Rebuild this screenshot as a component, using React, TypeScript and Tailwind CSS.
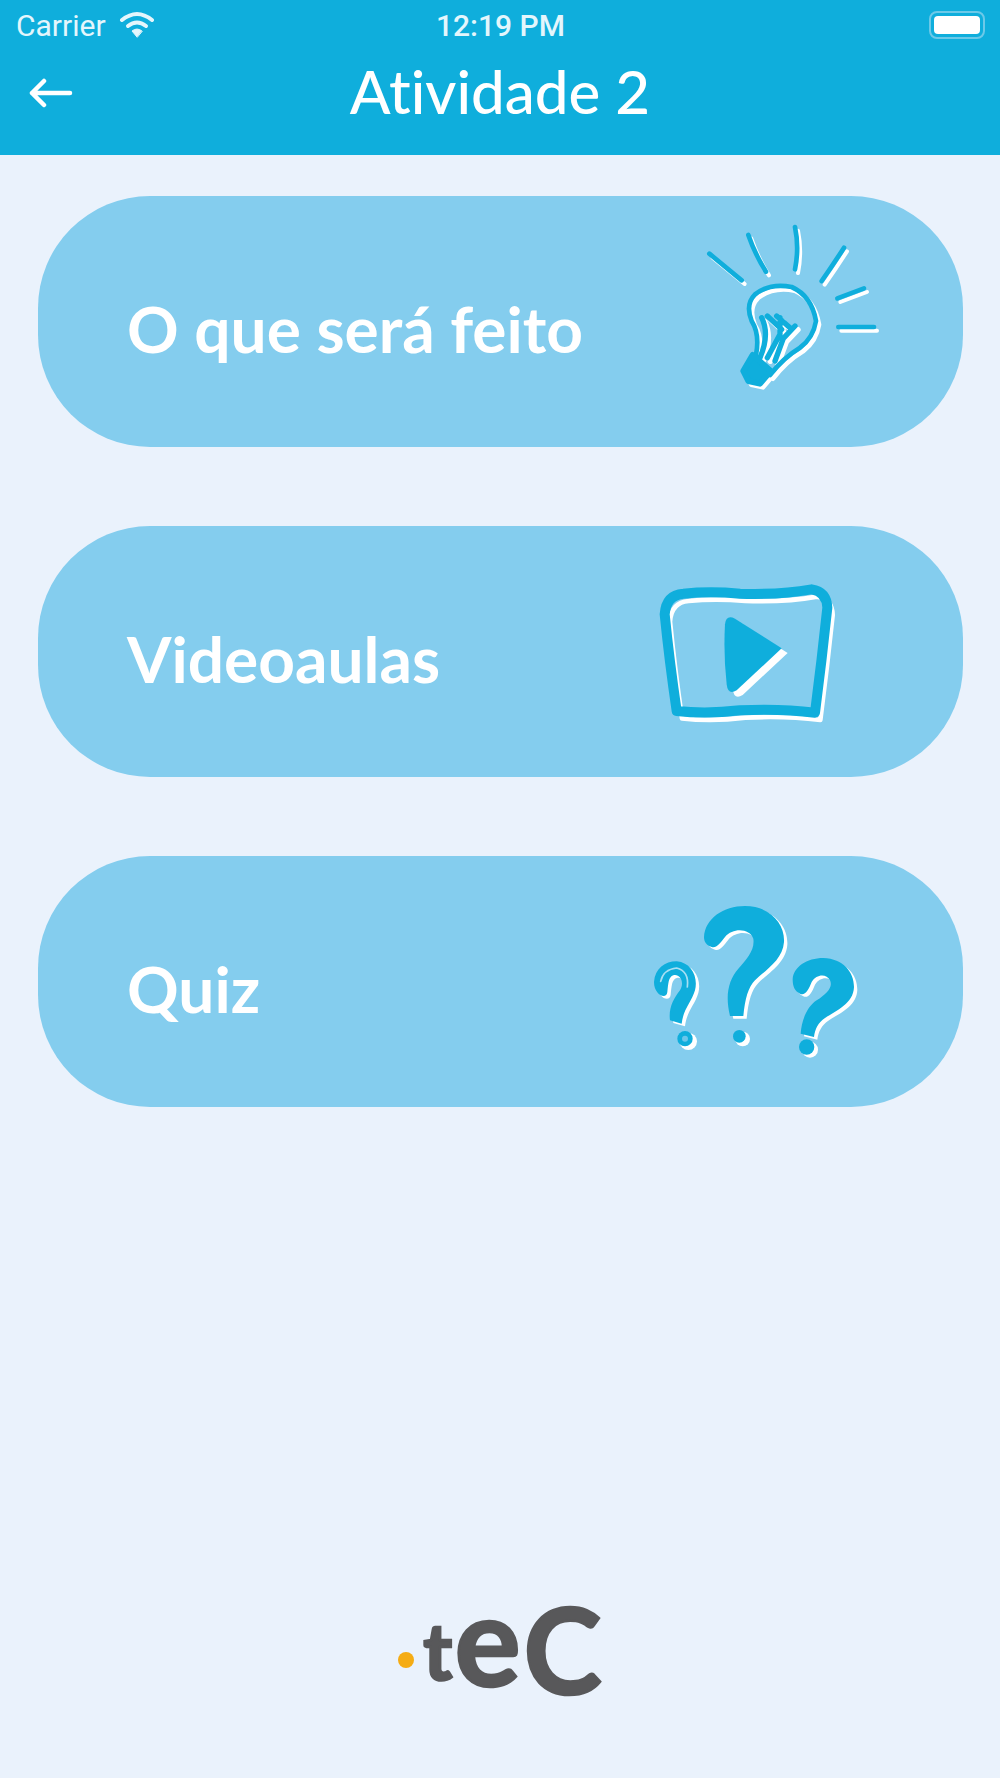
const BLUE = "#0faedc";

function BulbIcon() {
  const rays = (
    <>
      <path d="M88 158 L185 238" />
      <path d="M205 102 Q225 160 258 212" />
      <path d="M345 78 Q358 140 345 205" />
      <path d="M492 140 Q460 190 425 240" />
      <path d="M552 262 L472 292" />
      <path d="M582 378 L475 378" />
    </>
  );
  const bulb = (
    <>
      <path d="M228 462 Q240 400 215 360 Q195 310 225 280 Q270 245 335 258 Q395 285 408 360 Q400 410 360 440 Q310 470 270 522" strokeWidth="14" />
      <path d="M245 350 Q270 400 240 470 M300 350 L300 400 L262 470 M345 375 L310 412 L285 480 M262 345 L305 385 M290 345 L335 385" strokeWidth="16" />
    </>
  );
  const base = "M190 510 L218 462 L272 510 L240 548 L205 540 Z";
  return (
    <svg viewBox="0 0 660 630" className="h-[210px] w-[220px] shrink-0" fill="none" strokeLinecap="round" strokeLinejoin="round">
      <g stroke="#ffffff" strokeWidth="12" transform="translate(9 11)">
        {rays}
        {bulb}
        <path d={base} fill="#ffffff" strokeWidth="14" />
      </g>
      <g stroke={BLUE} strokeWidth="14">
        {rays}
        {bulb}
        <path d={base} fill={BLUE} strokeWidth="18" />
      </g>
    </svg>
  );
}

function VideoIcon() {
  const frame = "M74 130 Q78 72 130 68 Q210 60 300 68 Q420 72 515 55 Q560 62 562 110 Q545 270 525 425 Q420 412 300 418 Q200 430 110 420 Q88 270 74 130 Z";
  const play = "M255 160 Q258 130 285 143 L425 232 L290 358 Q264 374 260 340 Q250 250 255 160 Z";
  return (
    <svg viewBox="0 0 660 510" className="h-[170px] w-[220px] shrink-0" fill="none" strokeLinejoin="round">
      <path d={frame} stroke="#ffffff" strokeWidth="14" transform="translate(16 22)" />
      <path d={play} fill="#ffffff" transform="translate(18 14)" />
      <path d={frame} stroke={BLUE} strokeWidth="30" />
      <path d={play} fill={BLUE} />
    </svg>
  );
}

function QuizIcon() {
  const big = "M222 135 C225 80 280 42 345 42 C420 42 465 95 462 150 C458 205 405 235 375 265 C355 285 345 320 340 372 L300 372 C285 310 295 265 325 230 C350 200 375 175 370 140 C360 110 310 105 285 135 C270 155 258 170 245 165 C230 160 222 150 222 135 Z";
  const mid = "M488 262 C490 225 530 198 580 198 C640 200 672 240 672 285 C670 335 620 355 585 378 C565 392 555 410 552 435 L512 425 C515 385 530 345 560 325 C590 305 610 285 600 265 C590 245 560 245 545 270 C535 295 525 312 510 305 C495 298 488 285 488 262 Z";
  const small = "M72 270 C75 230 105 208 140 208 C185 212 205 255 195 295 C185 330 160 350 155 395 L120 385 C115 350 130 320 150 295 C165 270 150 245 130 250 C115 255 115 275 112 300 C110 325 72 310 72 270 Z";
  return (
    <svg viewBox="0 0 720 540" className="h-[180px] w-[240px] shrink-0" fill="none" strokeLinecap="round" strokeLinejoin="round">
      <g fill="#ffffff" transform="translate(10 8)">
        <path d={big} />
        <path d={mid} />
        <path d={small} />
        <circle cx="328" cy="433" r="22" />
        <circle cx="530" cy="465" r="24" />
        <circle cx="165" cy="440" r="26" />
      </g>
      <g fill={BLUE}>
        <path d={big} />
        <path d={mid} />
        <path d={small} />
        <circle cx="328" cy="433" r="19" />
        <circle cx="530" cy="465" r="23" />
        <circle cx="165" cy="440" r="23" />
      </g>
      <path d="M92 268 Q100 232 140 228 Q178 238 172 285" stroke="#a8dff3" strokeWidth="5" />
      <circle cx="165" cy="440" r="9" fill="#6cc6ea" />
    </svg>
  );
}

function MenuCard({ label, children }: { label: string; children: React.ReactNode }) {
  return (
    <div className="flex h-[251px] items-center justify-between rounded-[112px] bg-[#84cdee] pl-[89px]">
      <span className="pt-[14px] text-[64px] font-bold leading-none text-white">{label}</span>
      {children}
    </div>
  );
}

export default function App() {
  return (
    <div className="flex h-[1778px] w-[1000px] flex-col bg-[#eaf2fc] font-['Lato',sans-serif]">
      <header className="h-[155px] shrink-0 bg-[#0faedc] text-white">
        <div className="relative flex h-[50px] items-center justify-between pl-[16px] pr-[15px] font-['Roboto',sans-serif] text-[30px] text-[#e4f6fc]">
          <div className="flex items-center gap-[13px]">
            <span>Carrier</span>
            <svg viewBox="0 0 36 28" className="h-[28px] w-[36px]" fill="none" stroke="currentColor" strokeLinecap="round">
              <path d="M3 9 Q18 -3 33 9" strokeWidth="4" />
              <path d="M9 15 Q18 8 27 15" strokeWidth="4" />
              <path d="M18 26 L13 20 Q18 16 23 20 Z" fill="currentColor" strokeWidth="1" />
            </svg>
          </div>
          <span className="absolute left-[436px] font-medium">12:19 PM</span>
          <div className="flex h-[28px] w-[56px] items-center rounded-[8px] border-2 border-[#6cc9e8] p-[3px]">
            <div className="h-full w-full rounded-[4px] bg-white" />
          </div>
        </div>
        <div className="relative flex h-[80px] items-center justify-center">
          <svg viewBox="0 0 44 30" className="absolute left-[29px] top-[28px] h-[30px] w-[44px]" fill="none" stroke="#ffffff" strokeWidth="4.5" strokeLinecap="round" strokeLinejoin="round">
            <path d="M3 15 H41 M15 3 L3 15 L15 27" />
          </svg>
          <h1 className="pt-[2px] text-[60px] font-medium leading-none [font-variant-ligatures:none]">Atividade 2</h1>
        </div>
      </header>
      <main className="flex flex-col gap-[79px] pl-[38px] pr-[37px] pt-[41px]">
        <MenuCard label="O que será feito">
          <div className="mb-[32px] mr-[63px]">
            <BulbIcon />
          </div>
        </MenuCard>
        <MenuCard label="Videoaulas">
          <div className="mt-[8px] mr-[103px]">
            <VideoIcon />
          </div>
        </MenuCard>
        <MenuCard label="Quiz">
          <div className="mr-[93px]">
            <QuizIcon />
          </div>
        </MenuCard>
      </main>
      <footer className="mt-auto flex justify-center pb-[70px]">
        <div className="flex items-baseline font-bold leading-none text-[#58585a] [-webkit-text-stroke:2.5px_#58585a]">
          <span className="mr-[9px] h-[16px] w-[16px] -translate-y-[26px] rounded-full bg-[#f5ac14]" />
          <span className="mr-[2px] -translate-y-[14px] text-[78px]">t</span>
          <span className="mr-[3px] -translate-y-[8px] text-[124px]">e</span>
          <span className="text-[118px]">C</span>
        </div>
      </footer>
    </div>
  );
}
